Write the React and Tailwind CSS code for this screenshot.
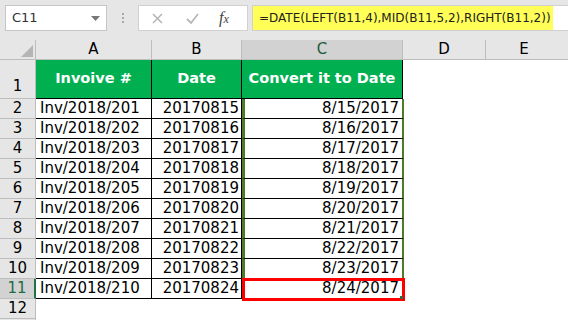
import React from "react";

const rows = [
  ["Inv/2018/201", "20170815", "8/15/2017"],
  ["Inv/2018/202", "20170816", "8/16/2017"],
  ["Inv/2018/203", "20170817", "8/17/2017"],
  ["Inv/2018/204", "20170818", "8/18/2017"],
  ["Inv/2018/205", "20170819", "8/19/2017"],
  ["Inv/2018/206", "20170820", "8/20/2017"],
  ["Inv/2018/207", "20170821", "8/21/2017"],
  ["Inv/2018/208", "20170822", "8/22/2017"],
  ["Inv/2018/209", "20170823", "8/23/2017"],
  ["Inv/2018/210", "20170824", "8/24/2017"],
];

const font = { fontFamily: '"DejaVu Sans", Verdana, sans-serif' };

export default function App() {
  return (
    <div className="w-[568px] h-[320px] overflow-hidden bg-white text-black" style={font}>
      {/* toolbar */}
      <div className="h-[40px] bg-[#e6e6e6] flex items-start pt-[5px]">
        <div className="ml-[5px] w-[102px] h-[26px] bg-white border border-[#c6c6c6] flex items-center justify-between pl-[6px] pr-[6px]">
          <span className="text-[13px] text-[#333]">C11</span>
          <svg width="9" height="5" viewBox="0 0 9 5"><path d="M0 0h9L4.5 5z" fill="#777" /></svg>
        </div>
        <div className="w-[31px] h-[26px] flex flex-col items-center justify-center gap-[2px]">
          <span className="w-[2px] h-[2px] bg-[#a8a8a8]" />
          <span className="w-[2px] h-[2px] bg-[#a8a8a8]" />
          <span className="w-[2px] h-[2px] bg-[#a8a8a8]" />
        </div>
        <div className="w-[110px] h-[26px] bg-white border border-[#d0d0d0] flex items-center">
          <svg className="ml-[13px]" width="11" height="11" viewBox="0 0 11 11"><path d="M1 1l9 9M10 1l-9 9" stroke="#b0b0b0" strokeWidth="1.4" /></svg>
          <svg className="ml-[23px]" width="13" height="11" viewBox="0 0 13 11"><path d="M1 6l4 4 7-9" stroke="#b8b8b8" strokeWidth="1.8" fill="none" /></svg>
          <span className="ml-[20px] text-[16px] italic text-[#444] leading-none" style={{ fontFamily: '"Liberation Serif", serif' }}>f<span className="text-[12px]">x</span></span>
        </div>
        <div className="ml-[4px] flex-1 h-[26px] bg-white border-t border-b border-l border-[#d0d0d0] flex items-center">
          <div className="w-[300px] h-[24px] bg-[#ffff57] flex items-center pl-[6px] text-[12px] text-[#222] whitespace-nowrap">
            =DATE(LEFT(B11,4),MID(B11,5,2),RIGHT(B11,2))
          </div>
        </div>
      </div>

      {/* column headers */}
      <div className="flex h-[20px] bg-[#e6e6e6] border-b border-[#bdbdbd] text-[15px]">
        <div className="w-[36px] border-r border-[#bdbdbd] relative">
          <svg className="absolute right-[2px] bottom-[2px]" width="12" height="12" viewBox="0 0 12 12"><path d="M12 0v12H0z" fill="#b5b5b5" /></svg>
        </div>
        <div className="w-[116px] border-r border-[#bdbdbd] flex items-center justify-center">A</div>
        <div className="w-[90px] border-r border-[#bdbdbd] flex items-center justify-center">B</div>
        <div className="w-[161px] border-r border-[#bdbdbd] bg-[#d2d2d2] text-[#1e5c3a] flex items-center justify-center">C</div>
        <div className="w-[83px] border-r border-[#bdbdbd] flex items-center justify-center">D</div>
        <div className="flex-1 flex items-center justify-center pr-[6px]">E</div>
      </div>

      {/* row 1 */}
      <div className="flex h-[39px] text-[14.5px]">
        <div className="w-[36px] bg-[#e6e6e6] border-r border-b border-[#bdbdbd] flex items-end justify-center pb-[1px] text-[15px]">1</div>
        <div className="w-[116px] bg-[#00b050] border-r border-b border-black flex items-center justify-center font-bold text-white">Invoive #</div>
        <div className="w-[90px] bg-[#00b050] border-r border-b border-black flex items-center justify-center font-bold text-white">Date</div>
        <div className="w-[161px] bg-[#00b050] border-r border-b border-black flex items-center justify-center font-bold text-white whitespace-nowrap">Convert it to Date</div>
        <div className="flex-1" />
      </div>

      {rows.map((r, i) => {
        const last = i === rows.length - 1;
        return (
          <div key={i} className="flex h-[20px] text-[15px]">
            <div
              className={
                last
                  ? "w-[36px] bg-[#d2d2d2] border-r-2 border-r-[#217346] border-b border-b-[#bdbdbd] flex items-end justify-center text-[#1e6b45] leading-[19px]"
                  : "w-[36px] bg-[#e6e6e6] border-r border-b border-[#bdbdbd] flex items-end justify-center leading-[19px]"
              }
            >
              {i + 2}
            </div>
            <div className="w-[116px] border-r border-b border-black flex items-end pl-[4px] leading-[19px] whitespace-nowrap">{r[0]}</div>
            <div className="w-[90px] border-r border-b border-black flex items-end justify-end pr-[2px] leading-[19px]">{r[1]}</div>
            <div
              className={
                last
                  ? "w-[162px] border-b border-black relative flex items-end justify-end pr-[5px] leading-[19px]"
                  : "w-[162px] border-l-[3px] border-l-[#4f7a28] border-r-[2px] border-r-[#4f7a28] border-b border-b-black flex items-end justify-end pr-[3px] leading-[19px]"
              }
            >
              {r[2]}
              {last && (
                <>
                  <div className="absolute left-0 -top-[1px] w-[163px] h-[23px] border-[3px] border-[#ff0000]" />
                  <div className="absolute right-[1px] -bottom-[1px] w-[3px] h-[3px] bg-[#217346]" />
                </>
              )}
            </div>
            <div className="flex-1" />
          </div>
        );
      })}

      {/* row 12 */}
      <div className="flex h-[20px] text-[15px]">
        <div className="w-[36px] bg-[#e6e6e6] border-r border-b border-[#bdbdbd] flex items-end justify-center leading-[19px]">12</div>
        <div className="flex-1" />
      </div>
      <div className="flex h-[20px]">
        <div className="w-[36px] bg-[#e6e6e6] border-r border-[#bdbdbd]" />
      </div>
    </div>
  );
}
